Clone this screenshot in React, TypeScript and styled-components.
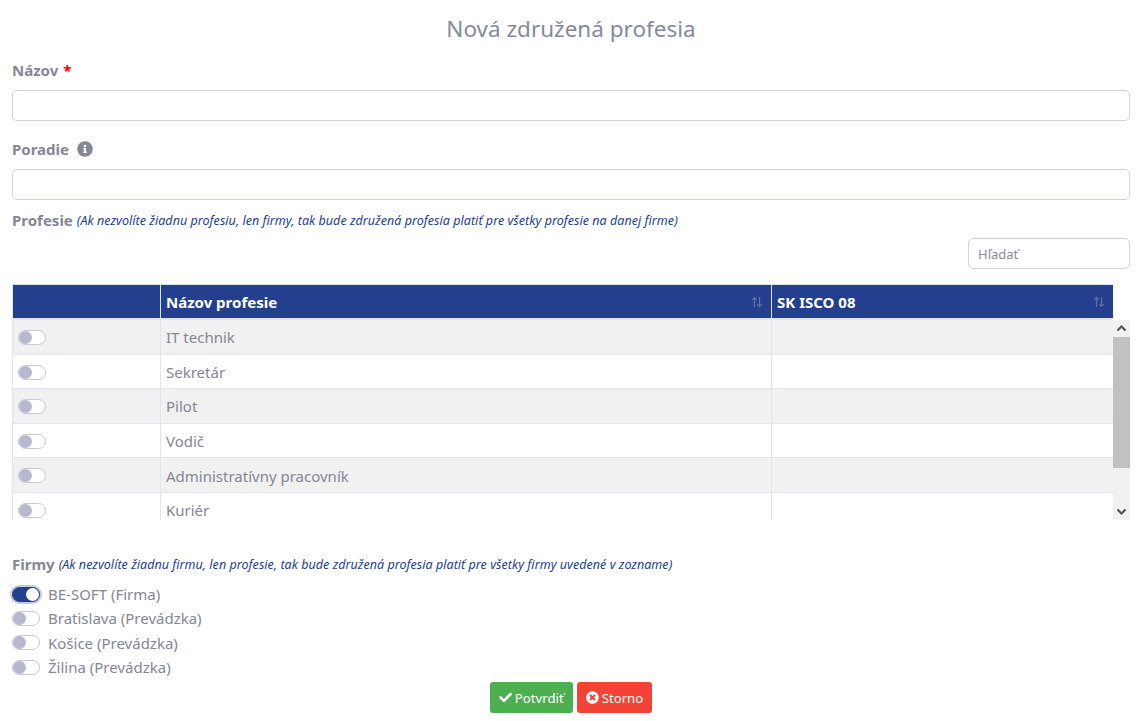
import React from "react";
import styled, { createGlobalStyle } from "styled-components";

const Global = createGlobalStyle`
  html, body { margin: 0; padding: 0; background: #fff; }
  body { font-family: "Noto Sans", "Open Sans", sans-serif; color: #8a8a9a; }
  * { box-sizing: border-box; }
`;

const Page = styled.div`
  width: 1138px;
  height: 721px;
  padding: 0 8px 0 12px;
  overflow: hidden;
`;
const Title = styled.h1`
  margin: 0;
  height: 58px;
  font-size: 22.5px;
  font-weight: 400;
  line-height: 58px;
  text-align: center;
  color: #868a97;
`;
const Label = styled.div`
  height: 32px;
  padding-bottom: 9px;
  display: flex;
  align-items: center;
  font-size: 15px;
  font-weight: 700;
  color: #868695;
  gap: 5px;
`;
const Star = styled.span`
  color: #f00;
`;
const Info = styled.svg`
  width: 16px;
  height: 16px;
  margin-left: 3px;
  fill: #868695;
`;
const TextInput = styled.input<{ $flush?: boolean }>`
  display: block;
  width: 100%;
  height: 31px;
  border: 1px solid #d3d0e4;
  border-radius: 5px;
  background: #fff;
  margin-bottom: ${(p) => (p.$flush ? "9px" : "16px")};
  outline: none;
`;
const SectionLabel = styled.div`
  height: 22px;
  display: flex;
  align-items: center;
  gap: 4px;
  font-size: 15px;
  font-weight: 700;
  color: #868695;
`;
const Hint = styled.em`
  font-size: 12.5px;
  font-weight: 400;
  color: #22408f;
  letter-spacing: 0.04px;
`;
const SearchRow = styled.div`
  display: flex;
  justify-content: flex-end;
  margin-top: 7px;
  height: 46px;
`;
const Search = styled.input`
  width: 162px;
  height: 31px;
  padding: 0 9px;
  border: 1px solid #d3d0e4;
  border-radius: 5px;
  font-family: inherit;
  font-size: 13px;
  outline: none;
  &::placeholder { color: #8d8d99; opacity: 1; }
`;
const TableWrap = styled.div`
  width: 1118px;
  height: 236px;
  display: flex;
  flex-direction: column;
`;
const Head = styled.div`
  display: grid;
  grid-template-columns: 148px 611px 341px;
  flex: none;
  width: 1101px;
  height: 36px;
  background: #233f8d;
  border: 1px solid #e2e2f2;
  border-bottom-width: 2px;
  border-right: none;
`;
const HeadCell = styled.div`
  position: relative;
  display: flex;
  align-items: center;
  padding: 0 0 0 5px;
  font-size: 15px;
  font-weight: 700;
  color: #fff;
  border-right: 1px solid #e2e2f2;
  &:last-child { border-right: none; }
`;
const Sort = styled.svg`
  position: absolute;
  right: 8px;
  top: 11px;
  width: 12px;
  height: 12px;
  stroke: #5d74ad;
  fill: none;
  stroke-width: 1.2;
`;
const BodyArea = styled.div`
  display: flex;
  height: 200px;
`;
const Rows = styled.div`
  width: 1101px;
  overflow: hidden;
`;
const Row = styled.div<{ $odd: boolean }>`
  display: grid;
  grid-template-columns: 148px 611px 342px;
  height: 34.6px;
  background: ${(p) => (p.$odd ? "#f1f1f1" : "#fff")};
  border-bottom: 1px solid #e2e2f2;
  border-left: 1px solid #e2e2f2;
`;
const Cell = styled.div`
  display: flex;
  align-items: center;
  padding: 1px 0 0 5px;
  font-size: 15px;
  color: #868695;
  border-right: 1px solid #e2e2f2;
`;
const SwitchCell = styled.div`
  padding: 10px 0 0 5px;
  border-right: 1px solid #e2e2f2;
`;
const Switch = styled.span<{ $on?: boolean }>`
  display: block;
  flex: none;
  position: relative;
  width: 28px;
  height: 15px;
  border-radius: 8px;
  border: 1px solid ${(p) => (p.$on ? "#233f8d" : "#c6c6da")};
  background: ${(p) => (p.$on ? "#233f8d" : "#fff")};
  ${(p) => (p.$on ? "box-shadow: 0 0 0 2px #c4c9e0;" : "")}
  &::after {
    content: "";
    position: absolute;
    top: 0;
    left: ${(p) => (p.$on ? "13px" : "0")};
    width: 13px;
    height: 13px;
    border-radius: 50%;
    background: ${(p) => (p.$on ? "#fff" : "#b7b8cd")};
  }
`;
const Bar = styled.div`
  width: 17px;
  display: flex;
  flex-direction: column;
  background: #f1f1f1;
`;
const BarBtn = styled.svg`
  display: block;
  width: 17px;
  height: 17px;
  flex: none;
  stroke: #505050;
  stroke-width: 2;
  fill: none;
`;
const Thumb = styled.div`
  height: 131px;
  flex: none;
  background: #c1c1c1;
`;
const Spacer = styled.div`
  flex: 1;
`;
const FirmsHead = styled(SectionLabel)`
  margin-top: 33px;
`;
const Firms = styled.div`
  margin-top: 7px;
`;
const Firm = styled.div`
  height: 24.3px;
  display: flex;
  align-items: center;
  gap: 8px;
  font-size: 15px;
  color: #868695;
`;
const Actions = styled.div`
  display: flex;
  justify-content: center;
  gap: 4px;
  margin-top: 3px;
`;
const Btn = styled.button<{ $c: string }>`
  display: flex;
  align-items: center;
  gap: 3px;
  height: 31px;
  padding: 0 9px;
  border: none;
  border-radius: 3px;
  background: ${(p) => p.$c};
  color: #fff;
  font-family: inherit;
  font-size: 13.2px;
`;
const BtnIcon = styled.svg`
  width: 13px;
  height: 13px;
  fill: #fff;
`;

const jobs = ["IT technik", "Sekretár", "Pilot", "Vodič", "Administratívny pracovník", "Kuriér"];
const firms = ["BE-SOFT (Firma)", "Bratislava (Prevádzka)", "Košice (Prevádzka)", "Žilina (Prevádzka)"];

const SortIcon = () => (
  <Sort viewBox="0 0 12 12">
    <path d="M3.5 11V1.5M1.2 3.8 3.5 1.5l2.3 2.3M8.5 1v9.5M6.2 8.2l2.3 2.3 2.3-2.3" />
  </Sort>
);

export default function App() {
  return (
    <Page>
      <Global />
      <Title>Nová združená profesia</Title>
      <Label>
        <span>Názov</span>
        <Star>*</Star>
      </Label>
      <TextInput />
      <Label>
        <span>Poradie</span>
        <Info viewBox="0 0 512 512">
          <path d="M256 8C119 8 8 119 8 256s111 248 248 248 248-111 248-248S393 8 256 8zm0 110c23.2 0 42 18.8 42 42s-18.8 42-42 42-42-18.8-42-42 18.8-42 42-42zm56 254c0 6.6-5.4 12-12 12h-88c-6.6 0-12-5.4-12-12v-24c0-6.600 5.400-12 12-12h12v-64h-12c-6.600 0-12-5.400-12-12v-24c0-6.600 5.400-12 12-12h64c6.600 0 12 5.400 12 12v100h12c6.600 0 12 5.400 12 12v24z" />
        </Info>
      </Label>
      <TextInput $flush />
      <SectionLabel>
        <span>Profesie</span>
        <Hint>(Ak nezvolíte žiadnu profesiu, len firmy, tak bude združená profesia platiť pre všetky profesie na danej firme)</Hint>
      </SectionLabel>
      <SearchRow>
        <Search placeholder="Hľadať" />
      </SearchRow>
      <TableWrap>
        <Head>
          <HeadCell />
          <HeadCell>
            Názov profesie
            <SortIcon />
          </HeadCell>
          <HeadCell>
            SK ISCO 08
            <SortIcon />
          </HeadCell>
        </Head>
        <BodyArea>
          <Rows>
            {jobs.map((j, i) => (
              <Row key={j} $odd={i % 2 === 0}>
                <SwitchCell>
                  <Switch />
                </SwitchCell>
                <Cell>{j}</Cell>
                <Cell />
              </Row>
            ))}
          </Rows>
          <Bar>
            <BarBtn viewBox="0 0 17 17">
              <path d="M4.500 10.500 8.500 6.500l4 4" />
            </BarBtn>
            <Thumb />
            <Spacer />
            <BarBtn viewBox="0 0 17 17">
              <path d="M4.500 6.500 8.500 10.500l4-4" />
            </BarBtn>
          </Bar>
        </BodyArea>
      </TableWrap>
      <FirmsHead>
        <span>Firmy</span>
        <Hint>(Ak nezvolíte žiadnu firmu, len profesie, tak bude združená profesia platiť pre všetky firmy uvedené v zozname)</Hint>
      </FirmsHead>
      <Firms>
        {firms.map((f, i) => (
          <Firm key={f}>
            <Switch $on={i === 0} />
            <span>{f}</span>
          </Firm>
        ))}
      </Firms>
      <Actions>
        <Btn $c="#4caf50">
          <BtnIcon viewBox="0 0 512 512">
            <path d="M173.900 439.400 7.500 273c-10-10-10-26.200 0-36.200l36.200-36.200c10-10 26.200-10 36.200 0L192 312.700 432.100 72.600c10-10 26.200-10 36.200 0l36.200 36.200c10 10 10 26.200 0 36.200L210.100 439.400c-10 10-26.200 10-36.200 0z" />
          </BtnIcon>
          Potvrdiť
        </Btn>
        <Btn $c="#f44336">
          <BtnIcon viewBox="0 0 512 512">
            <path d="M256 8C119 8 8 119 8 256s111 248 248 248 248-111 248-248S393 8 256 8zm121.600 313.100c4.700 4.700 4.700 12.300 0 17L338 377.600c-4.700 4.700-12.300 4.700-17 0L256 312l-65.100 65.600c-4.700 4.700-12.300 4.700-17 0L134.400 338c-4.700-4.700-4.700-12.300 0-17l65.600-65-65.600-65.100c-4.700-4.700-4.700-12.300 0-17l39.600-39.600c4.700-4.700 12.300-4.700 17 0l65 65.700 65.100-65.600c4.700-4.700 12.300-4.700 17 0l39.600 39.600c4.700 4.700 4.700 12.300 0 17L312 256l65.600 65.100z" />
          </BtnIcon>
          Storno
        </Btn>
      </Actions>
    </Page>
  );
}
